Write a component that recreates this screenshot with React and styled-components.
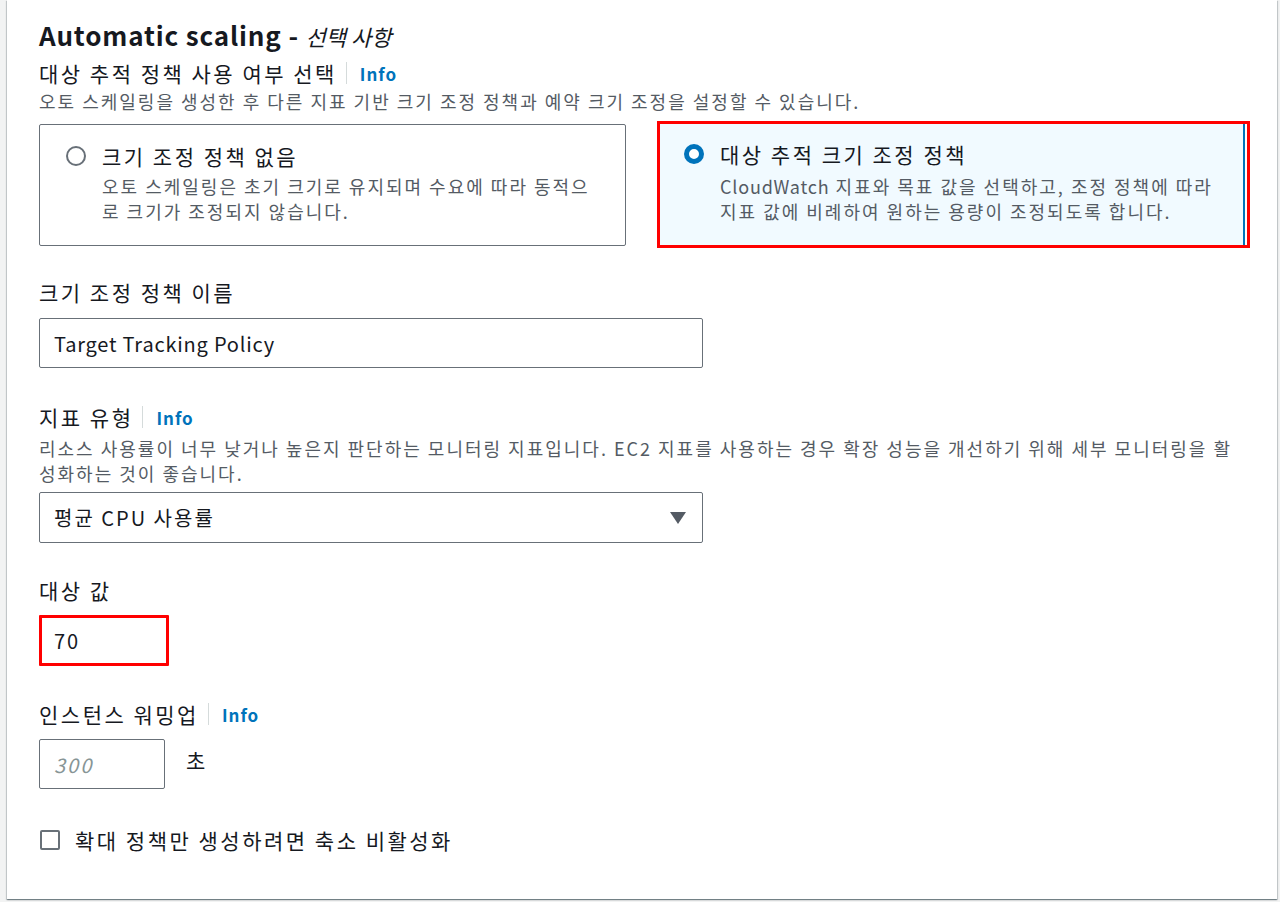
import styled, { createGlobalStyle } from "styled-components";

const GlobalStyle = createGlobalStyle`
  html, body {
    margin: 0;
    padding: 0;
    background: #f2f3f3;
    font-family: "Noto Sans CJK KR", "Noto Sans", sans-serif;
    color: #16191f;
  }
`;

const Page = styled.div`
  height: 902px;
  box-sizing: border-box;
  padding: 0 3px 3px 7px;
  display: flex;
`;

const Panel = styled.section`
  flex: 1;
  background: #ffffff;
  box-shadow: 0 1px 1px 0 rgba(0, 28, 36, 0.35), 1px 1px 1px 0 rgba(0, 28, 36, 0.15),
    -1px 1px 1px 0 rgba(0, 28, 36, 0.15);
  padding: 20px 26px 0 32px;
  display: flex;
  flex-direction: column;
  align-items: flex-start;
`;

const Heading = styled.h2`
  margin: 0;
  font-size: 26px;
  line-height: 30px;
  font-weight: 700;
  letter-spacing: 0.85px;
`;

const Optional = styled.span`
  font-style: italic;
  font-weight: 400;
  font-size: 22px;
  letter-spacing: 0;
`;

const LabelRow = styled.div`
  display: flex;
  align-items: center;
  margin-top: ${(p) => p.$mt || 0}px;
  height: 26px;
`;

const Label = styled.span`
  font-size: 21px;
  line-height: 26px;
  letter-spacing: 2.5px;
  color: #16191f;
`;

const Divider = styled.span`
  width: 1px;
  height: 22px;
  background: #d5dbdb;
  margin: 0 13px 0 9px;
`;

const Info = styled.a`
  font-size: 17px;
  font-weight: 700;
  letter-spacing: 1px;
  color: #0073bb;
  text-decoration: none;
  cursor: pointer;
`;

const Description = styled.p`
  margin: ${(p) => p.$mt || 0}px 0 0;
  font-size: 18px;
  line-height: 25px;
  letter-spacing: 2px;
  color: #545b64;
`;

const Latin = styled.span`
  letter-spacing: 0.8px;
`;

const Tiles = styled.div`
  display: grid;
  grid-template-columns: 587px 593px;
  column-gap: 31px;
  align-items: center;
  margin-top: 7px;
`;

const Tile = styled.label`
  box-sizing: border-box;
  display: flex;
  align-items: flex-start;
  gap: 16px;
  padding: ${(p) => (p.$selected ? "18px 12px 21px 24px" : "19px 12px 21px 26px")};
  border: 1px solid #687078;
  border-radius: 2px;
  background: #ffffff;
  cursor: pointer;
  ${(p) =>
    p.$selected &&
    `
    border: none;
    border-right: 2px solid #0073bb;
    margin-right: 2px;
    border-radius: 0;
    background: #f1faff;
  `}
`;

const Highlight = styled.div`
  border: 3px solid #ff0000;
  background: #ffffff;
`;

const Radio = styled.span`
  flex: none;
  box-sizing: border-box;
  width: 20px;
  height: 20px;
  margin-top: 2px;
  border-radius: 50%;
  background: #ffffff;
  border: ${(p) => (p.$checked ? "5px solid #0073bb" : "2px solid #687078")};
`;

const TileText = styled.div`
  display: flex;
  flex-direction: column;
  white-space: nowrap;
`;

const TileTitle = styled.span`
  font-size: 21px;
  line-height: 24px;
  letter-spacing: 2.5px;
  color: #16191f;
`;

const TileDesc = styled.span`
  margin-top: ${(p) => p.$mt}px;
  font-size: 18px;
  line-height: 25px;
  letter-spacing: 2px;
  color: #545b64;
`;

const Field = styled.div`
  box-sizing: border-box;
  display: flex;
  align-items: center;
  justify-content: space-between;
  width: ${(p) => p.$w}px;
  height: ${(p) => p.$h || 50}px;
  margin-top: ${(p) => p.$mt || 0}px;
  padding: 0 16px 0 14px;
  border: 1px solid #687078;
  border-radius: 2px;
  background: #ffffff;
  font-size: 20px;
  letter-spacing: ${(p) => (p.$tight ? 0.8 : 2)}px;
  color: #16191f;
`;

const Alert = styled(Field)`
  border: 3px solid #ff0000;
  border-radius: 1px;
  padding-left: 12px;
`;

const Placeholder = styled.span`
  font-style: italic;
  color: #879596;
`;

const Inline = styled.div`
  display: flex;
  align-items: flex-start;
  gap: 21px;
  margin-top: ${(p) => p.$mt || 0}px;
`;

const Unit = styled.span`
  font-size: 21px;
  line-height: 26px;
  letter-spacing: 2px;
  margin-top: 8px;
`;

const CheckRow = styled.label`
  display: flex;
  align-items: center;
  gap: 15px;
  margin-top: 39px;
  margin-left: 1px;
  height: 24px;
`;

const Box = styled.span`
  box-sizing: border-box;
  width: 20px;
  height: 20px;
  border: 2px solid #687078;
  border-radius: 2px;
  background: #ffffff;
`;

function Caret() {
  return (
    <svg width="16" height="12" viewBox="0 0 16 12">
      <polygon points="0,0 16,0 8,12" fill="#545b64" />
    </svg>
  );
}

export default function App() {
  return (
    <>
      <GlobalStyle />
      <Page>
        <Panel>
          <Heading>
            Automatic scaling - <Optional>선택 사항</Optional>
          </Heading>

          <LabelRow $mt={9}>
            <Label>대상 추적 정책 사용 여부 선택</Label>
            <Divider />
            <Info>Info</Info>
          </LabelRow>
          <Description $mt={3}>
            오토 스케일링을 생성한 후 다른 지표 기반 크기 조정 정책과 예약 크기 조정을 설정할 수 있습니다.
          </Description>

          <Tiles>
            <Tile>
              <Radio />
              <TileText>
                <TileTitle>크기 조정 정책 없음</TileTitle>
                <TileDesc $mt={6}>
                  오토 스케일링은 초기 크기로 유지되며 수요에 따라 동적으
                  <br />로 크기가 조정되지 않습니다.
                </TileDesc>
              </TileText>
            </Tile>
            <Highlight>
              <Tile $selected>
                <Radio $checked />
                <TileText>
                  <TileTitle>대상 추적 크기 조정 정책</TileTitle>
                  <TileDesc $mt={8}>
                    <Latin>CloudWatch</Latin> 지표와 목표 값을 선택하고, 조정 정책에 따라
                    <br />
                    지표 값에 비례하여 원하는 용량이 조정되도록 합니다.
                  </TileDesc>
                </TileText>
              </Tile>
            </Highlight>
          </Tiles>

          <LabelRow $mt={31}>
            <Label>크기 조정 정책 이름</Label>
          </LabelRow>
          <Field $w={664} $mt={13} $tight>
            Target Tracking Policy
          </Field>

          <LabelRow $mt={36}>
            <Label>지표 유형</Label>
            <Divider />
            <Info>Info</Info>
          </LabelRow>
          <Description $mt={6}>
            리소스 사용률이 너무 낮거나 높은지 판단하는 모니터링 지표입니다. EC2 지표를 사용하는 경우 확장 성능을 개선하기 위해 세부 모니터링을 활
            <br />
            성화하는 것이 좋습니다.
          </Description>
          <Field $w={664} $h={51} $mt={6}>
            <span>평균 CPU 사용률</span>
            <Caret />
          </Field>

          <LabelRow $mt={34}>
            <Label>대상 값</Label>
          </LabelRow>
          <Alert $w={130} $h={51} $mt={12}>
            70
          </Alert>

          <LabelRow $mt={35}>
            <Label>인스턴스 워밍업</Label>
            <Divider />
            <Info>Info</Info>
          </LabelRow>
          <Inline $mt={12}>
            <Field $w={126} $h={50}>
              <Placeholder>300</Placeholder>
            </Field>
            <Unit>초</Unit>
          </Inline>

          <CheckRow>
            <Box />
            <Label>확대 정책만 생성하려면 축소 비활성화</Label>
          </CheckRow>
        </Panel>
      </Page>
    </>
  );
}
